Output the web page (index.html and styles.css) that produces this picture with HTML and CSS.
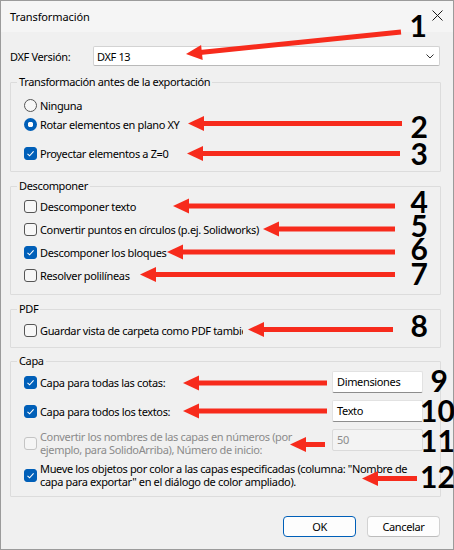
FILE: index.html
```html
<!DOCTYPE html>
<html lang="es">
<head>
<meta charset="utf-8">
<title>Transformación</title>
<link rel="stylesheet" href="styles.css">
</head>
<body>
<div class="window">
  <div class="titlebar">
    <span class="title">Transformación</span>
    <svg class="close" width="11" height="11" viewBox="0 0 11 11"><path d="M0.5 0.5L10.5 10.5M10.5 0.5L0.5 10.5" stroke="#1a1a1a" stroke-width="1" fill="none"/></svg>
  </div>
  <div class="content">
    <div class="dxf-row">
      <span class="dxf-label">DXF Versión:</span>
      <div class="combo"><span>DXF 13</span><svg class="chevron" width="8" height="5" viewBox="0 0 8 5"><path d="M0.5 0.5L4 4L7.5 0.5" stroke="#333" stroke-width="1" fill="none"/></svg></div>
    </div>

    <fieldset class="group g1">
      <legend>Transformación antes de la exportación</legend>
      <div class="opt"><span class="radio"></span><span>Ninguna</span></div>
      <div class="opt"><span class="radio on"></span><span>Rotar elementos en plano XY</span></div>
      <div class="opt sep"><span class="check on"><svg width="13" height="13" viewBox="0 0 13 13"><path d="M3.5 6.8L5.6 8.8L9.6 4.4" stroke="#fff" stroke-width="1.1" fill="none"/></svg></span><span>Proyectar elementos a Z=0</span></div>
    </fieldset>

    <fieldset class="group g2">
      <legend>Descomponer</legend>
      <div class="opt tall"><span class="check"></span><span>Descomponer texto</span></div>
      <div class="opt tall"><span class="check"></span><span>Convertir puntos en círculos (p.ej. Solidworks)</span></div>
      <div class="opt tall"><span class="check on"><svg width="13" height="13" viewBox="0 0 13 13"><path d="M3.5 6.8L5.6 8.8L9.6 4.4" stroke="#fff" stroke-width="1.1" fill="none"/></svg></span><span>Descomponer los bloques</span></div>
      <div class="opt tall"><span class="check"></span><span>Resolver polilíneas</span></div>
    </fieldset>

    <fieldset class="group g3">
      <legend>PDF</legend>
      <div class="opt"><span class="check"></span><span class="clip">Guardar vista de carpeta como PDF también</span></div>
    </fieldset>

    <fieldset class="group g4">
      <legend>Capa</legend>
      <div class="field-row first">
        <div class="opt"><span class="check on"><svg width="13" height="13" viewBox="0 0 13 13"><path d="M3.5 6.8L5.6 8.8L9.6 4.4" stroke="#fff" stroke-width="1.1" fill="none"/></svg></span><span>Capa para todas las cotas:</span></div>
        <div class="textbox">Dimensiones</div>
      </div>
      <div class="field-row">
        <div class="opt"><span class="check on"><svg width="13" height="13" viewBox="0 0 13 13"><path d="M3.5 6.8L5.6 8.8L9.6 4.4" stroke="#fff" stroke-width="1.1" fill="none"/></svg></span><span>Capa para todos los textos:</span></div>
        <div class="textbox">Texto</div>
      </div>
      <div class="field-row multi">
        <div class="opt wrap disabled"><span class="check dis"></span><span>Convertir los nombres de las capas en números (por<br>ejemplo, para SolidoArriba), Número de inicio:</span></div>
        <div class="textbox dis">50</div>
      </div>
      <div class="opt wrap last"><span class="check on"><svg width="13" height="13" viewBox="0 0 13 13"><path d="M3.5 6.8L5.6 8.8L9.6 4.4" stroke="#fff" stroke-width="1.1" fill="none"/></svg></span><span>Mueve los objetos por color a las capas especificadas (columna: "Nombre de<br>capa para exportar" en el diálogo de color ampliado).</span></div>
    </fieldset>

    <div class="buttons">
      <button class="btn default">OK</button>
      <button class="btn">Cancelar</button>
    </div>
  </div>

  <svg class="annotations" width="454" height="550" viewBox="0 0 454 550">
    <g class="arrows">
      <line x1="200" y1="52.6" x2="401" y2="32"/>
      <polygon points="186,54 202.7,59.9 201.1,44.9"/>

      <line x1="202" y1="123.5" x2="402" y2="123.5"/>
      <polygon points="188,123.5 204,116 204,131"/>
      <line x1="201" y1="153.5" x2="400" y2="153.5"/>
      <polygon points="187,153.5 203,146 203,161"/>

      <line x1="187" y1="206" x2="395" y2="206"/>
      <polygon points="173,206 189,198.5 189,213.5"/>
      <line x1="277" y1="229" x2="395" y2="229"/>
      <polygon points="263,229 279,221.5 279,236.5"/>
      <line x1="181" y1="252" x2="395" y2="252"/>
      <polygon points="167,252 183,244.5 183,259.5"/>
      <line x1="154" y1="274.5" x2="395" y2="274.5"/>
      <polygon points="140,274.5 156,267 156,282"/>

      <line x1="262" y1="329.5" x2="393" y2="329.5"/>
      <polygon points="248,329.5 264,322 264,337"/>

      <line x1="197" y1="383" x2="327" y2="383"/>
      <polygon points="183,383 199,375.5 199,390.5"/>
      <line x1="197" y1="411" x2="327" y2="411"/>
      <polygon points="183,411 199,403.5 199,418.5"/>
      <line x1="304" y1="444.5" x2="325" y2="444.5"/>
      <polygon points="290,444.5 306,437 306,452"/>
      <line x1="376" y1="478.5" x2="417" y2="478.5"/>
      <polygon points="362,478.5 378,471 378,486"/>
    </g>
    <g class="nums">
      <text x="427" y="37" text-anchor="end">1</text>
      <text x="428" y="138" text-anchor="end">2</text>
      <text x="428" y="165" text-anchor="end">3</text>
      <text x="428" y="213" text-anchor="end">4</text>
      <text x="428" y="237" text-anchor="end">5</text>
      <text x="428" y="260" text-anchor="end">6</text>
      <text x="428" y="285" text-anchor="end">7</text>
      <text x="428" y="337" text-anchor="end">8</text>
      <text x="448" y="392" text-anchor="end">9</text>
      <text x="420" y="422">10</text>
      <text x="420" y="452">11</text>
      <text x="420" y="488">12</text>
    </g>
  </svg>
</div>
</body>
</html>
```

FILE: styles.css
```css
* { box-sizing: border-box; }

html, body {
  margin: 0;
  padding: 0;
}

body {
  width: 454px;
  height: 550px;
  background: #f0f0f0;
  font-family: "Noto Sans", "Open Sans", sans-serif;
  font-size: 11px;
  letter-spacing: -0.35px;
  color: #000;
}

.window {
  position: relative;
  width: 454px;
  height: 550px;
  border: 1px solid #9b9b9b;
  background: #f0f0f0;
  display: flex;
  flex-direction: column;
}

.titlebar {
  height: 31px;
  flex: none;
  background: #f5f5f5;
  display: flex;
  align-items: center;
  justify-content: space-between;
  padding: 0 10px 0 9px;
}

.title {
  font-size: 11px;
  letter-spacing: -0.1px;
  line-height: 16px;
}

.close {
  display: block;
  margin-top: -3px;
}

.content {
  flex: 1;
  padding: 14px 12px 0 9px;
  display: flex;
  flex-direction: column;
}

.dxf-row {
  display: flex;
  align-items: center;
  height: 20px;
}

.dxf-label {
  width: 83px;
  flex: none;
}

.combo {
  flex: 1;
  height: 20px;
  margin-right: 1px;
  background: #fff;
  border: 1px solid #d3d3d3;
  border-bottom-color: #b9b9b9;
  border-radius: 2px;
  display: flex;
  align-items: center;
  justify-content: space-between;
  padding: 0 5px 0 3px;
}

.chevron { display: block; }

.group {
  margin: 0;
  border: 1px solid #dcdcdc;
  border-radius: 1px;
  padding: 0 17px 8px 6px;
  min-inline-size: 0;
}

.group legend {
  padding: 0 2px;
  line-height: 16px;
}

.g1 { margin-top: 8px; padding-top: 6px; padding-bottom: 8px; }
.g2 { margin-top: 6px; padding-top: 1px; padding-bottom: 7px; }
.g3 { margin-top: 6px; padding-top: 4px; padding-bottom: 7px; }
.g4 { margin-top: 5px; padding-top: 2px; padding-bottom: 8px; }

.opt {
  display: flex;
  align-items: center;
  height: 19px;
  padding-left: 7px;
  white-space: nowrap;
}

.opt.sep { margin-top: 10px; }
.opt.tall { height: 23px; }

.opt.wrap {
  height: auto;
  line-height: 13px;
}

.disabled { color: #8b8b8b; }

.radio, .check {
  flex: none;
  width: 13px;
  height: 13px;
  margin-right: 3px;
  border: 1px solid #555;
  background: #f7f7f7;
}

.radio { border-radius: 50%; }
.radio.on {
  border: none;
  background: radial-gradient(circle, #fff 0 2.6px, #005fb8 3px);
}

.check { border-radius: 3px; }
.check svg { display: block; margin: -1px; }
.check.on {
  border-color: #005fb8;
  background: #005fb8;
}
.check.dis {
  border-color: #c4c4c4;
  background: #f5f5f5;
}

.clip {
  display: block;
  width: 203px;
  overflow: hidden;
}

.field-row {
  display: flex;
  align-items: center;
  justify-content: space-between;
  height: 22px;
  margin-top: 7px;
}

.field-row.first { margin-top: 0; }

.field-row.multi {
  height: auto;
  align-items: flex-start;
}

.field-row.multi .opt { margin-top: 1px; }

.opt.last { margin-top: 6px; }

.textbox {
  flex: none;
  width: 91px;
  height: 22px;
  background: #fff;
  border: 1px solid #e2e2e2;
  border-bottom-color: #8d8d8d;
  border-radius: 2px;
  padding: 0 4px;
  line-height: 20px;
}

.textbox.dis {
  background: #f3f3f3;
  border-color: #dadada;
  color: #8b8b8b;
}

.buttons {
  display: flex;
  justify-content: flex-end;
  gap: 11px;
  margin-top: 19px;
  padding-right: 1px;
}

.btn {
  width: 73px;
  height: 21px;
  padding: 0;
  font: inherit;
  letter-spacing: inherit;
  color: #000;
  background: #fdfdfd;
  border: 1px solid #d2d2d2;
  border-bottom-color: #bcbcbc;
  border-radius: 4px;
}

.btn.default {
  border-color: #005fb8;
}

.annotations {
  position: absolute;
  left: -1px;
  top: -1px;
  pointer-events: none;
}

.arrows line {
  stroke: #f72b1c;
  stroke-width: 5;
}

.arrows polygon {
  fill: #f72b1c;
}

.nums text {
  font-family: "Lato", "DejaVu Sans", sans-serif;
  font-weight: 700;
  font-size: 30px;
  letter-spacing: 0;
  fill: #000;
}
```
